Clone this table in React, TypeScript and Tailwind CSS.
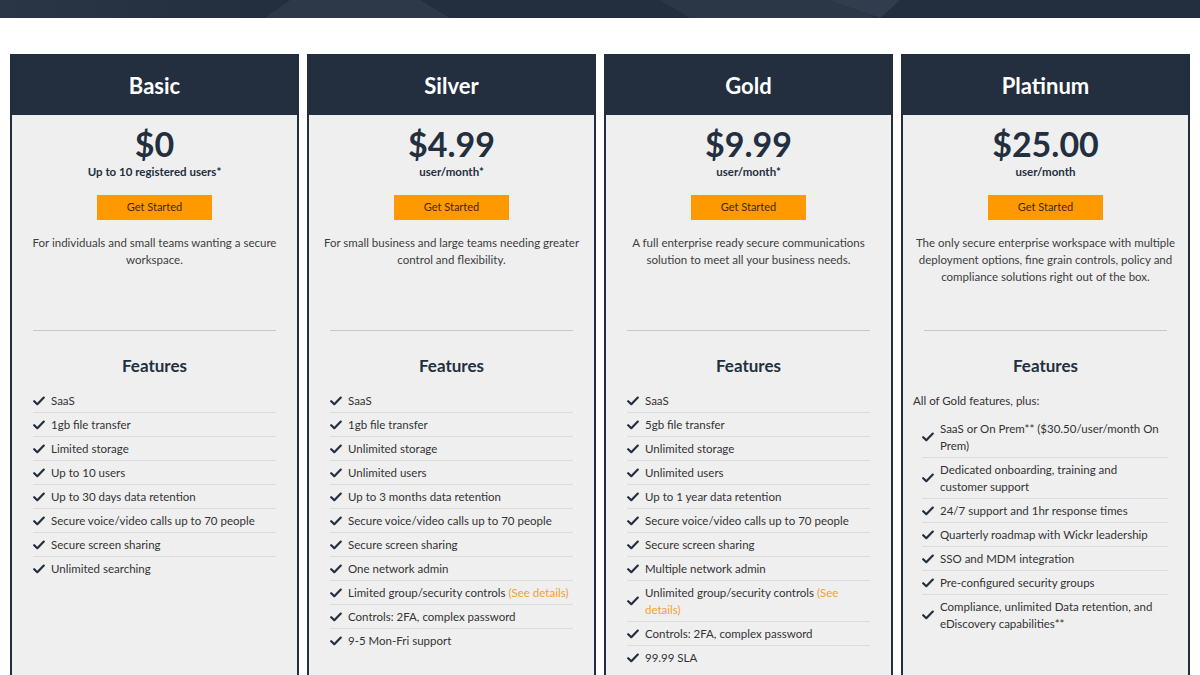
import React from 'react';

type Feature = { text: string; link?: boolean };

interface Plan {
  name: string;
  price: string;
  unit: string;
  blurb: string;
  intro?: string;
  features: Feature[];
}

const plans: Plan[] = [
  {
    name: 'Basic',
    price: '$0',
    unit: 'Up to 10 registered users*',
    blurb: 'For individuals and small teams wanting a secure workspace.',
    features: [
      { text: 'SaaS' },
      { text: '1gb file transfer' },
      { text: 'Limited storage' },
      { text: 'Up to 10 users' },
      { text: 'Up to 30 days data retention' },
      { text: 'Secure voice/video calls up to 70 people' },
      { text: 'Secure screen sharing' },
      { text: 'Unlimited searching' },
    ],
  },
  {
    name: 'Silver',
    price: '$4.99',
    unit: 'user/month*',
    blurb: 'For small business and large teams needing greater control and flexibility.',
    features: [
      { text: 'SaaS' },
      { text: '1gb file transfer' },
      { text: 'Unlimited storage' },
      { text: 'Unlimited users' },
      { text: 'Up to 3 months data retention' },
      { text: 'Secure voice/video calls up to 70 people' },
      { text: 'Secure screen sharing' },
      { text: 'One network admin' },
      { text: 'Limited group/security controls', link: true },
      { text: 'Controls: 2FA, complex password' },
      { text: '9-5 Mon-Fri support' },
    ],
  },
  {
    name: 'Gold',
    price: '$9.99',
    unit: 'user/month*',
    blurb: 'A full enterprise ready secure communications solution to meet all your business needs.',
    features: [
      { text: 'SaaS' },
      { text: '5gb file transfer' },
      { text: 'Unlimited storage' },
      { text: 'Unlimited users' },
      { text: 'Up to 1 year data retention' },
      { text: 'Secure voice/video calls up to 70 people' },
      { text: 'Secure screen sharing' },
      { text: 'Multiple network admin' },
      { text: 'Unlimited group/security controls', link: true },
      { text: 'Controls: 2FA, complex password' },
      { text: '99.99 SLA' },
    ],
  },
  {
    name: 'Platinum',
    price: '$25.00',
    unit: 'user/month',
    blurb:
      'The only secure enterprise workspace with multiple deployment options, fine grain controls, policy and compliance solutions right out of the box.',
    intro: 'All of Gold features, plus:',
    features: [
      { text: 'SaaS or On Prem** ($30.50/user/month On Prem)' },
      { text: 'Dedicated onboarding, training and customer support' },
      { text: '24/7 support and 1hr response times' },
      { text: 'Quarterly roadmap with Wickr leadership' },
      { text: 'SSO and MDM integration' },
      { text: 'Pre-configured security groups' },
      { text: 'Compliance, unlimited Data retention, and eDiscovery capabilities**' },
    ],
  },
];

function Check() {
  return (
    <svg width="12" height="10" viewBox="0 0 12 10" className="shrink-0">
      <path d="M1.2 5.2 L4.3 8.2 L10.8 1.6" fill="none" stroke="#232f3e" strokeWidth="2.2" strokeLinecap="round" strokeLinejoin="round" />
    </svg>
  );
}

function FeatureRow({ f, last, tight }: { f: Feature; last: boolean; tight?: boolean }) {
  return (
    <li
      className={`flex items-center gap-[6px] py-[3px] leading-[17px] ${tight ? 'pr-[8px]' : ''} ${
        last ? '' : 'border-b border-[#dcdcdc]'
      }`}
    >
      <Check />
      <span>
        {f.text}
        {f.link && <span className="text-[#f0a230]"> (See details)</span>}
      </span>
    </li>
  );
}

function PlanCard({ plan }: { plan: Plan }) {
  return (
    <div className="flex flex-col border-2 border-[#232f3e] bg-[#efeff0]">
      <div className="h-[59px] bg-[#232f3e] flex items-center justify-center">
        <h2 className="text-white text-[22px] font-bold">{plan.name}</h2>
      </div>
      <div className="flex-1 px-[21px] pt-[9px] pb-6 flex flex-col items-center">
        <div className="text-[34px] leading-[40px] font-bold text-[#232f3e]">{plan.price}</div>
        <div className="text-[11.5px] leading-4 font-bold text-[#232f3e]">{plan.unit}</div>
        <button className="mt-[15px] w-[115px] h-[25px] bg-[#ff9900] text-[11px] text-[#3b2a12]">Get Started</button>
        <p className="mt-[14px] h-[96px] w-[272px] text-center text-[11.5px] leading-[17px] text-[#3d3d3d]">
          {plan.blurb}
        </p>
        <div className="w-full h-px bg-[#c8c8c8]" />
        <h3 className="mt-[23px] text-[17px] leading-6 font-bold text-[#232f3e]">Features</h3>
        <div className="mt-[11px] w-full text-[11.5px] text-[#333]">
          {plan.intro ? (
            <>
              <p className="-ml-[11px] leading-[17px] py-[3px]">{plan.intro}</p>
              <ul className="mt-[5px] -ml-[2px] mr-[-1px]">
                {plan.features.map((f, i) => (
                  <FeatureRow key={i} f={f} tight last={i === plan.features.length - 1} />
                ))}
              </ul>
            </>
          ) : (
            <ul>
              {plan.features.map((f, i) => (
                <FeatureRow key={i} f={f} last={i === plan.features.length - 1} />
              ))}
            </ul>
          )}
        </div>
      </div>
    </div>
  );
}

export default function App() {
  return (
    <div className="bg-white min-h-screen" style={{ fontFamily: 'Lato, "Noto Sans", sans-serif' }}>
      {/* banner strip at the top */}
      <div className="h-[18px] bg-[#232f3e] overflow-hidden">
        <svg width="1200" height="18" viewBox="0 0 1200 18" preserveAspectRatio="none">
          <defs>
            <linearGradient id="lg" x1="0" x2="1">
              <stop offset="0" stopColor="#2a3646" />
              <stop offset="1" stopColor="#232f3e" />
            </linearGradient>
          </defs>
          <rect x="0" y="0" width="260" height="18" fill="url(#lg)" />
          <polygon points="265,18 290,0 420,0 450,18" fill="#2d3949" />
          <polygon points="660,0 850,0 875,18 690,18" fill="#2b3747" />
          <polygon points="830,0 900,0 880,18" fill="#313d4e" />
        </svg>
      </div>
      <div className="grid grid-cols-4 gap-2 px-[10px] pt-[36px]">
        {plans.map((p) => (
          <PlanCard key={p.name} plan={p} />
        ))}
      </div>
    </div>
  );
}
